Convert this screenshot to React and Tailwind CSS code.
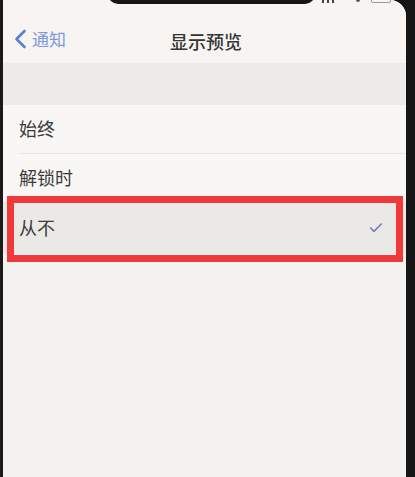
import { Check } from "lucide-react";

const font = { fontFamily: '"Noto Sans", "Noto Sans CJK SC", sans-serif' };

function Row({ label, selected }) {
  return (
    <div
      className={`flex items-center justify-between pl-[16px] pr-[22px] ${selected ? "h-[52px] bg-[#ebe9e6]" : "h-[48px] bg-[#f9f7f5]"}`}
    >
      <span className="text-[18px] leading-none text-[#3b3b3b]">{label}</span>
      {selected && <Check className="h-[16px] w-[16px] text-[#7c79c9]" strokeWidth={2.5} />}
    </div>
  );
}

export default function App() {
  return (
    <div className="relative flex h-[477px] w-[415px] overflow-hidden bg-[#141414]" style={font}>
      <div className="w-[3px] bg-[#1a1a1a]" />
      <div className="relative flex flex-1 flex-col overflow-hidden rounded-tr-[16px] bg-[#f4f2f0]">
        <div className="relative flex h-[63px] items-end bg-[#f7f4f2] pb-[14px]">
          <div className="flex items-center pl-[11px]">
            <svg width="13" height="20" viewBox="0 0 13 20" fill="none">
              <path d="M10.5 2 L2.5 10 L10.5 18" stroke="#5a7fd8" strokeWidth="2.6" strokeLinecap="round" strokeLinejoin="round" />
            </svg>
            <span className="ml-[5px] text-[17px] leading-none text-[#7d98dd]">通知</span>
          </div>
          <span className="absolute left-[3px] right-0 bottom-[12px] text-center text-[18px] font-medium leading-none text-[#353535]">
            显示预览
          </span>
        </div>
        <div className="h-[42px] bg-[#eeecea]" />
        <Row label="始终" />
        <div className="h-px bg-[#f9f7f5] pl-[16px]">
          <div className="h-px bg-[#e8e6e3]" />
        </div>
        <Row label="解锁时" />
        <Row label="从不" selected />
        <div className="flex-1 bg-[#f4f2f0]" />

        {/* notch and status bar bits */}
        <div className="absolute left-[105px] top-[-16px] z-10 h-[20px] w-[207px] rounded-b-[10px] bg-[#151515]" />
        <div className="absolute left-[319px] top-0 z-10 flex items-start gap-[3px]">
          <span className="h-[3px] w-[2px] bg-[#444]" />
          <span className="h-[3px] w-[2px] bg-[#444]" />
          <span className="h-[3px] w-[2px] bg-[#444]" />
        </div>
        <div className="absolute left-[353px] top-0 z-10 h-[2px] w-[4px] rounded-b bg-[#555]" />
        <div className="absolute left-[368px] top-[-4px] z-10 h-[7px] w-[20px] rounded-[2px] border border-[#999]" />

        <div className="absolute left-[4px] top-[196px] z-10 h-[66px] w-[396px] border-[7px] border-[#f0393b]" />
      </div>
      <div className="w-[9px] bg-[#161616]" />
    </div>
  );
}
